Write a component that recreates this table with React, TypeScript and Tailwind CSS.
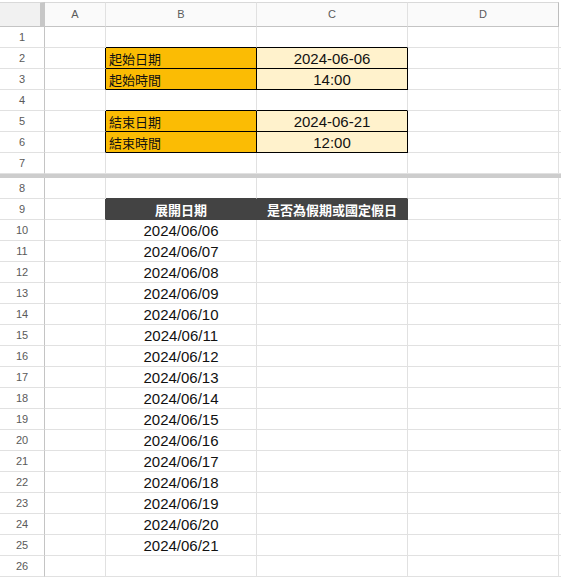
import React from "react";

type BK = "grid" | "black" | "dark" | "head" | "none";

const rightCls: Record<BK, string> = {
  grid: "border-r border-r-[#e1e1e1]",
  black: "border-r border-r-black",
  dark: "border-r border-r-[#434343]",
  head: "border-r border-r-[#c4c4c4]",
  none: "",
};
const bottomCls: Record<BK, string> = {
  grid: "border-b border-b-[#e1e1e1]",
  black: "border-b border-b-black",
  dark: "border-b border-b-[#434343]",
  head: "border-b border-b-[#c4c4c4]",
  none: "",
};

const SANS = "font-['Liberation_Sans','Noto_Sans_CJK_TC',sans-serif]";
const CJK = "font-['Noto_Sans_CJK_TC','Liberation_Sans',sans-serif]";

type CellDef = { text: string; kind: "label" | "value" | "head" | "date" };

function cellFor(r: number, c: number): CellDef | null {
  const labels: Record<number, [string, string]> = {
    2: ["起始日期", "2024-06-06"],
    3: ["起始時間", "14:00"],
    5: ["結束日期", "2024-06-21"],
    6: ["結束時間", "12:00"],
  };
  if (labels[r]) {
    if (c === 2) return { text: labels[r][0], kind: "label" };
    if (c === 3) return { text: labels[r][1], kind: "value" };
  }
  if (r === 9) {
    if (c === 2) return { text: "展開日期", kind: "head" };
    if (c === 3) return { text: "是否為假期或國定假日", kind: "head" };
  }
  if (r >= 10 && r <= 25 && c === 2) {
    const d = 6 + (r - 10);
    return { text: `2024/06/${String(d).padStart(2, "0")}`, kind: "date" };
  }
  return null;
}

function rightKind(r: number, c: number): BK {
  if (c === 0) return "head";
  if ([2, 3, 5, 6].includes(r) && c >= 1 && c <= 3) return "black";
  if (r === 9 && c >= 1 && c <= 3) return "dark";
  if (c === 5) return "none";
  return "grid";
}

function bottomKind(r: number, c: number): BK {
  if (r >= 1 && r <= 6 && (c === 2 || c === 3)) return "black";
  if ((r === 8 || r === 9) && (c === 2 || c === 3)) return "dark";
  return "grid";
}

function Cell({ r, c }: { r: number; c: number }) {
  const def = cellFor(r, c);
  const border = `${rightKind(r, c)} ${bottomKind(r, c)}`;
  const base = `h-[21px] flex items-center overflow-hidden whitespace-nowrap ${rightCls[rightKind(r, c)]} ${bottomCls[bottomKind(r, c)]}`;
  void border;
  if (c === 0) {
    return (
      <div className={`${base} justify-center bg-white text-[11px] text-[#5a5a5a] ${SANS}`}>
        {r}
      </div>
    );
  }
  if (!def) return <div className={`${base} bg-white`} />;
  if (def.kind === "label")
    return (
      <div className={`${base} bg-[#fbbc04] pl-[3px] text-[13px] leading-none text-[#111] ${CJK}`}>
        {def.text}
      </div>
    );
  if (def.kind === "value")
    return (
      <div className={`${base} justify-center bg-[#fff2cc] text-[15px] leading-none text-[#111] ${SANS}`}>
        {def.text}
      </div>
    );
  if (def.kind === "head")
    return (
      <div className={`${base} justify-center bg-[#434343] text-[13px] font-bold leading-none text-white ${CJK}`}>
        {def.text}
      </div>
    );
  return (
    <div className={`${base} justify-center bg-white text-[15px] leading-none text-[#111] ${SANS}`}>
      {def.text}
    </div>
  );
}

function Row({ r }: { r: number }) {
  return (
    <>
      {[0, 1, 2, 3, 4, 5].map((c) => (
        <Cell key={c} r={r} c={c} />
      ))}
    </>
  );
}

export default function App() {
  const letters = ["A", "B", "C", "D"];
  const top = [1, 2, 3, 4, 5, 6, 7];
  const bottom = Array.from({ length: 19 }, (_, i) => i + 8);
  return (
    <div className="w-[561px] h-[577px] overflow-hidden bg-white">
      <div className="h-[2px] bg-white" />
      <div className="grid grid-cols-[45px_61px_151px_151px_151px_1fr]">
        <div className="h-[25px] bg-[#f1f1f1] border-t border-t-[#d9d9d9] border-b border-b-[#c4c4c4] border-r-[5px] border-r-[#c7c7c7]" />
        {letters.map((l, i) => (
          <div
            key={l}
            className={`h-[25px] flex items-center justify-center bg-[#fafafa] border-t border-t-[#d9d9d9] border-b border-b-[#c4c4c4] border-r ${i === 3 ? "border-r-[#bdbdbd]" : "border-r-[#e1e1e1]"} text-[11px] text-[#5a5a5a] ${SANS}`}
          >
            {l}
          </div>
        ))}
        <div className="h-[25px] bg-white" />
        {top.map((r) => (
          <Row key={r} r={r} />
        ))}
        <div className="col-span-6 h-[4px] bg-[#cdcdcd]" />
        {bottom.map((r) => (
          <Row key={r} r={r} />
        ))}
      </div>
    </div>
  );
}
